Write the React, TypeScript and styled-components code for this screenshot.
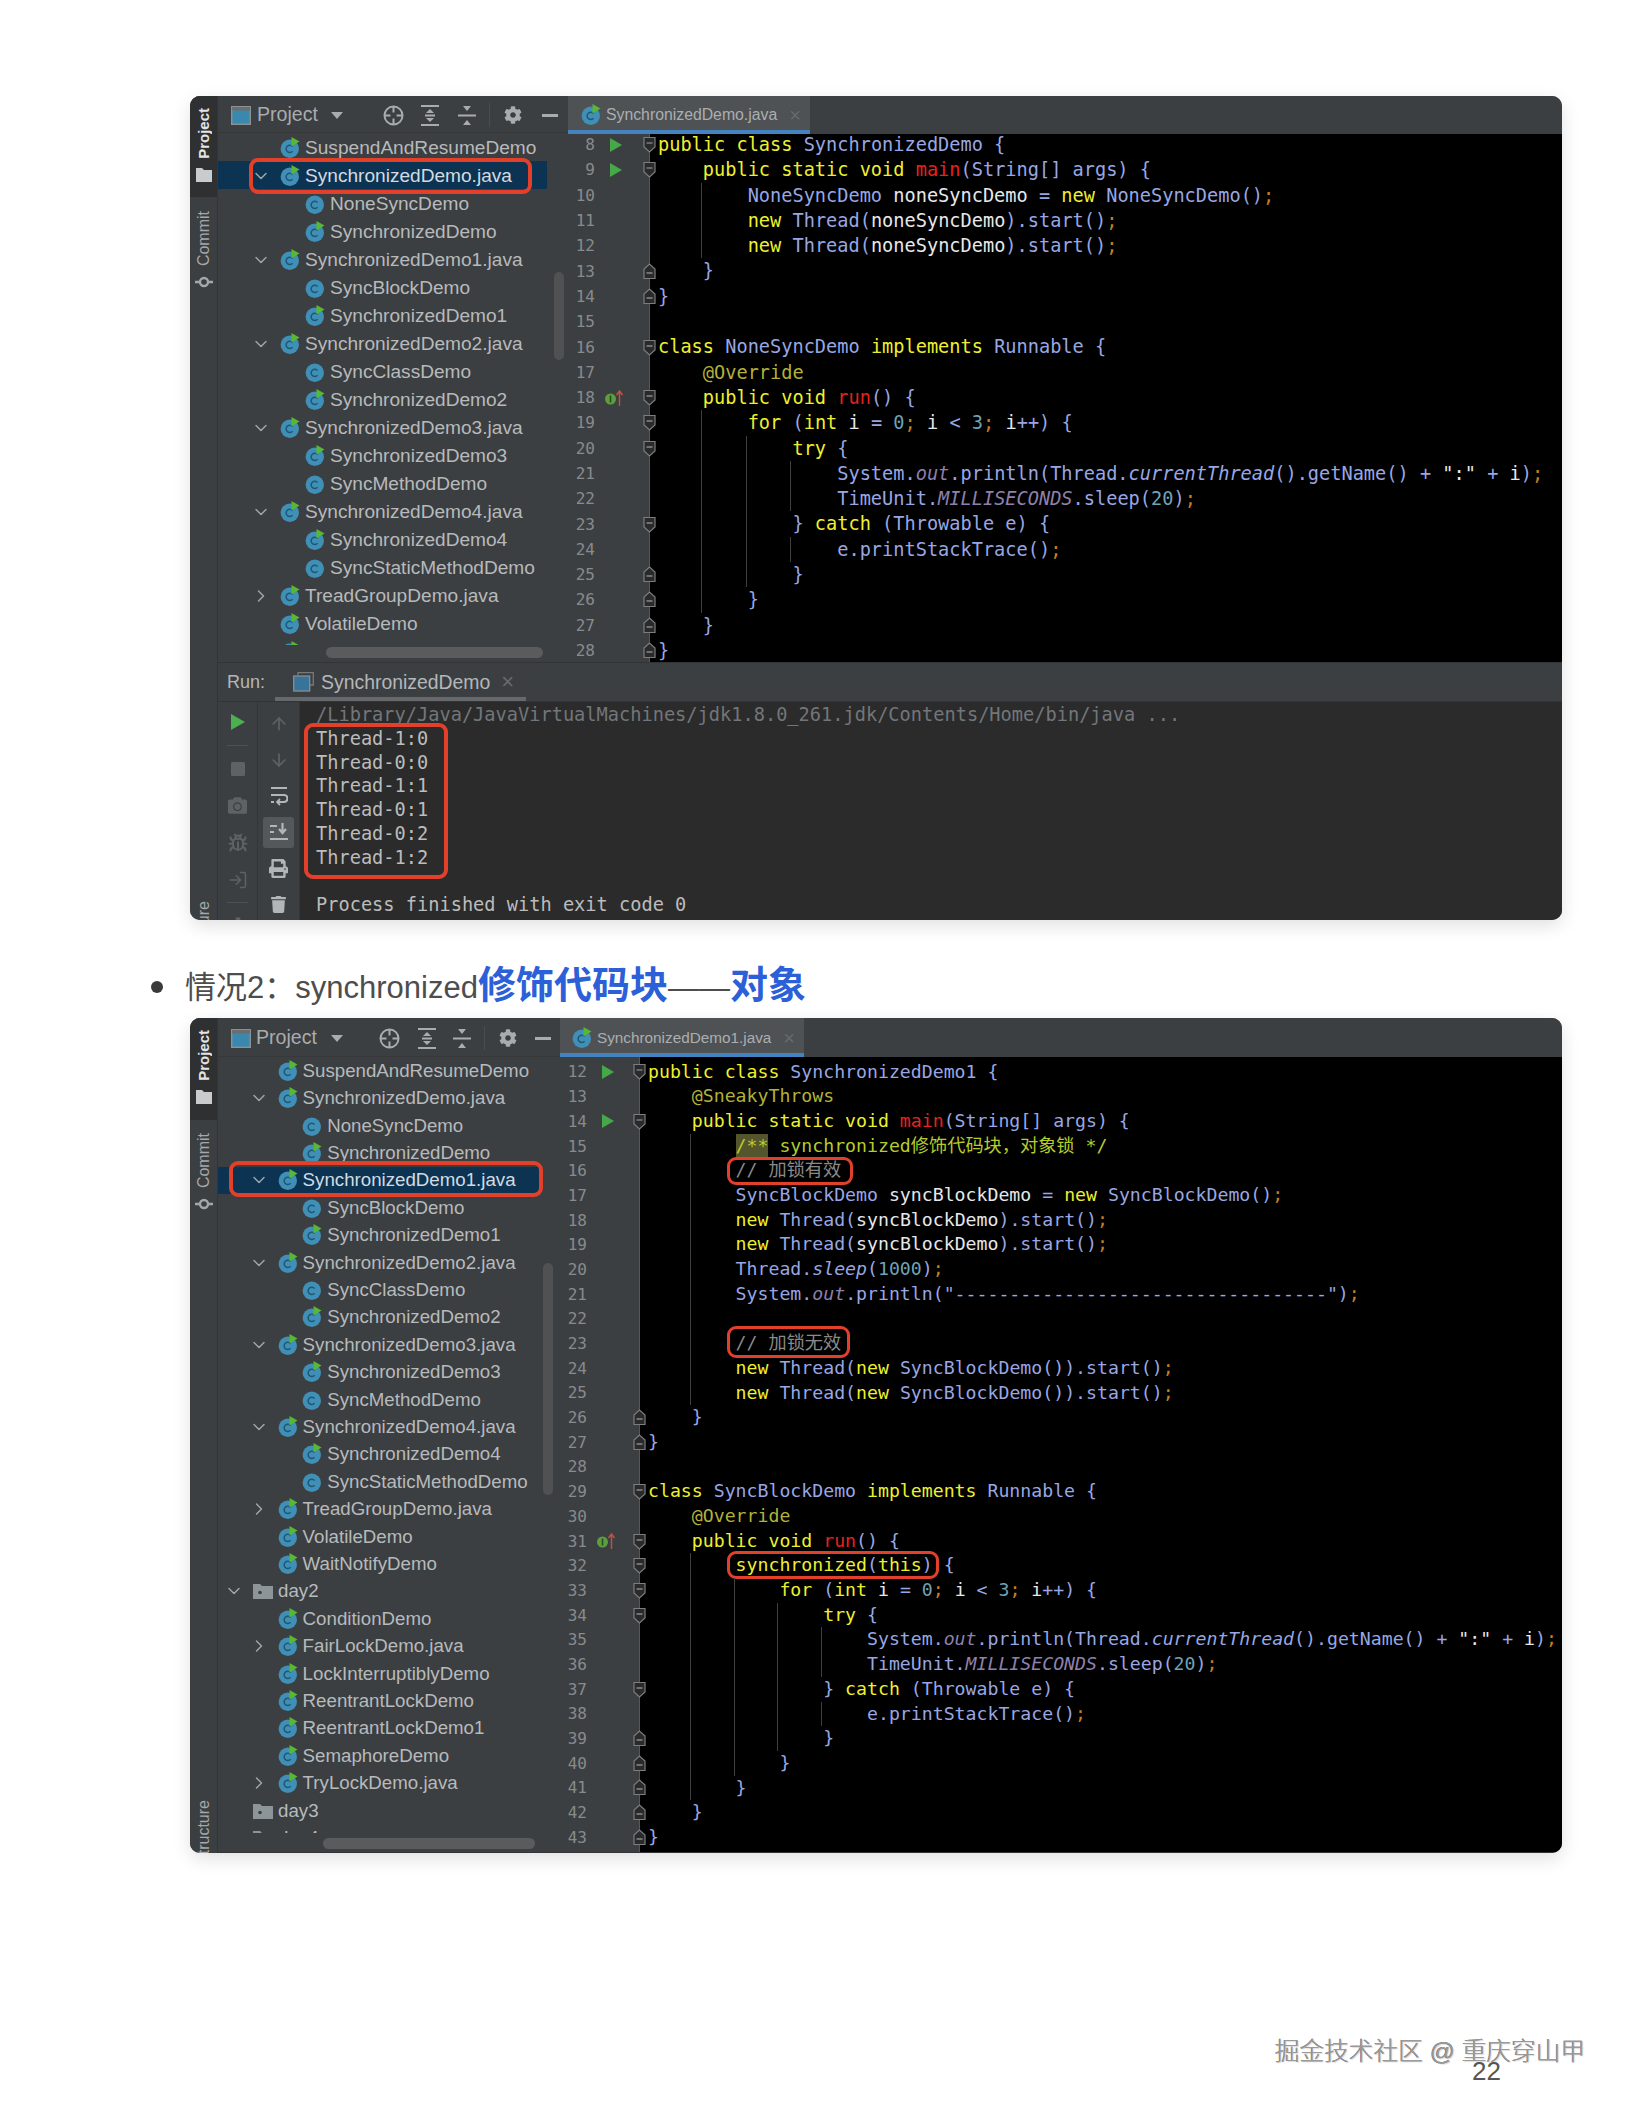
import React from 'react'
import styled, { createGlobalStyle, ThemeProvider } from 'styled-components'
import { ArrowDown, ArrowUp, Bug, ChevronDown, ChevronRight, LogIn } from 'lucide-react'
import { FaCamera, FaCog, FaPrint, FaTrash } from 'react-icons/fa'

type Metrics = {
  height: number
  treeW: number
  toolbarH: number
  tabH: number
  rowH: number
  rowNudge: number
  listH: number
  treeFont: number
  baseIndent: number
  stepIndent: number
  selW: number
  boxLeft: number
  boxW: number
  boxTop: number
  boxBottom: number
  thumbLeft: number
  thumbW: number
  thumbBottom: number
  vThumbTop: number
  vThumbH: number
  vThumbRight: number
  tabW: number
  tabFont: number
  tabPad: number
  gutterW: number
  codeFont: number
  lineH: number
  codeShift: number
  codePad: number
  topH: number
  commitGap: number
  structureGap: number
  projectH: number
  toolGaps: number[]
}

const m = (key: keyof Metrics) => (p: { theme: any }) => p.theme[key]

const GlobalStyle = createGlobalStyle`
  html, body {
    margin: 0;
    background: #fff;
  }
`

const Page = styled.div`
  width: 1632px;
  height: 2112px;
  padding-top: 96px;
  box-sizing: border-box;
  overflow: hidden;
  background: #fff;
`

const Window = styled.div`
  display: grid;
  grid-template-columns: 28px 1fr;
  width: 1372px;
  height: ${m('height')}px;
  margin-left: 190px;
  border-radius: 10px;
  overflow: hidden;
  background: #3c3f41;
  box-shadow: 0 6px 18px rgba(0, 0, 0, 0.12);
`

const Stripe = styled.div`
  display: flex;
  flex-direction: column;
  overflow: hidden;
  border-right: 1px solid #333537;
  background: #3c3f41;
  font-family: 'Liberation Sans', sans-serif;
  font-size: 16px;
`

const StripeTab = styled.div<{ $active?: boolean }>`
  display: flex;
  flex-direction: column;
  align-items: center;
  flex-shrink: 0;
  height: ${(p) => (p.$active ? `${p.theme.projectH}px` : 'auto')};
  padding-top: ${(p) => (p.$active ? 12 : p.theme.commitGap)}px;
  box-sizing: border-box;
  background: ${(p) => (p.$active ? '#2e3032' : 'transparent')};
  color: ${(p) => (p.$active ? '#e4e4e4' : '#a5a8aa')};
`

const StripeLabel = styled.span<{ $bold?: boolean }>`
  writing-mode: vertical-rl;
  transform: rotate(180deg);
  line-height: 18px;
  font-size: ${(p) => (p.$bold ? 15 : 16)}px;
  font-weight: ${(p) => (p.$bold ? 700 : 400)};
`

const StripeBottom = styled(StripeLabel)`
  flex-shrink: 0;
  align-self: center;
  margin-top: ${m('structureGap')}px;
  color: #a5a8aa;
  transform: rotate(180deg);
`

const Main = styled.div`
  display: flex;
  flex-direction: column;
  min-width: 0;
`

const TopSplit = styled.div`
  display: flex;
  flex-shrink: 0;
  height: ${m('topH')}px;
  overflow: hidden;
  border-bottom: 1px solid #323436;
  box-sizing: border-box;
`

const TreePanel = styled.div`
  position: relative;
  flex-shrink: 0;
  width: ${m('treeW')}px;
  font-family: 'Liberation Sans', sans-serif;
  font-size: ${m('treeFont')}px;
  color: #b7babc;
`

const Toolbar = styled.div`
  display: flex;
  align-items: center;
  height: ${m('toolbarH')}px;
  padding: 2px 0 0 13px;
  border-bottom: 1px solid #36383a;
  box-sizing: border-box;
  font-size: 19.6px;
  color: #a9acae;
`

const ToolItem = styled.span<{ $ml: number }>`
  display: flex;
  align-items: center;
  margin-left: ${(p) => p.$ml}px;
  line-height: 1;
`

const ToolDivider = styled(ToolItem)`
  width: 1px;
  height: 24px;
  background: #4a4c4e;
`

const TreeList = styled.div`
  height: ${m('listH')}px;
  overflow: hidden;
`

const TreeRow = styled.div<{ $level: number; $selected?: boolean }>`
  position: relative;
  display: flex;
  align-items: center;
  width: ${m('selW')}px;
  height: ${m('rowH')}px;
  padding-top: ${m('rowNudge')}px;
  padding-left: ${(p) => p.theme.baseIndent + p.$level * p.theme.stepIndent}px;
  box-sizing: border-box;
  background: ${(p) => (p.$selected ? '#0c3452' : 'transparent')};
  color: ${(p) => (p.$selected ? '#d3dbe2' : 'inherit')};
  white-space: nowrap;
`

const Arrow = styled.span`
  display: flex;
  justify-content: center;
  flex-shrink: 0;
  width: 24px;
  margin-right: 7px;
  color: #a3a6a8;
`

const NodeIcon = styled.svg`
  flex-shrink: 0;
  width: 20px;
  height: 20px;
  margin-right: 5px;
  overflow: visible;
`

const TreeBox = styled.span`
  position: absolute;
  left: ${m('boxLeft')}px;
  width: ${m('boxW')}px;
  top: ${m('boxTop')}px;
  bottom: ${m('boxBottom')}px;
  box-sizing: border-box;
  border: 4px solid #e2402a;
  border-radius: 9px;
`

const HThumb = styled.div`
  position: absolute;
  left: ${m('thumbLeft')}px;
  width: ${m('thumbW')}px;
  bottom: ${m('thumbBottom')}px;
  height: 11px;
  border-radius: 6px;
  background: #595b5d;
`

const VThumb = styled.div`
  position: absolute;
  right: ${m('vThumbRight')}px;
  top: ${m('vThumbTop')}px;
  width: 10px;
  height: ${m('vThumbH')}px;
  border-radius: 5px;
  background: #4f5153;
`

const Editor = styled.div`
  display: flex;
  flex-direction: column;
  flex: 1;
  min-width: 0;
`

const TabBar = styled.div`
  display: flex;
  flex-shrink: 0;
  height: ${m('tabH')}px;
  background: #3c3f41;
`

const Tab = styled.div`
  display: flex;
  align-items: center;
  width: ${m('tabW')}px;
  padding-left: ${m('tabPad')}px;
  padding-top: 4px;
  border-bottom: 4px solid #4383c0;
  box-sizing: border-box;
  background: #4e5254;
  font-family: 'Liberation Sans', sans-serif;
  font-size: ${m('tabFont')}px;
  color: #abaeb0;
`

const TabClose = styled.span`
  margin-left: 12px;
  color: #666a6c;
  font-size: 20px;
  line-height: 1;
`

const EditorBody = styled.div`
  display: flex;
  flex: 1;
  min-height: 0;
  overflow: hidden;
  font-family: 'DejaVu Sans Mono', 'Noto Sans CJK SC', monospace;
  font-variant-ligatures: none;
`

const Gutter = styled.div`
  position: relative;
  z-index: 1;
  flex-shrink: 0;
  width: ${m('gutterW')}px;
  box-sizing: border-box;
  border-right: 1px solid #55575a;
  background: #3c3f41;
  font-size: 16px;
  color: #888b8d;
  & > :first-child {
    margin-top: ${m('codeShift')}px;
  }
`

const GutterRow = styled.div`
  display: flex;
  align-items: center;
  height: ${m('lineH')}px;
`

const LineNo = styled.span`
  width: 27px;
  text-align: right;
  flex-shrink: 0;
`

const RunMark = styled.svg`
  flex-shrink: 0;
  width: 14px;
  height: 16px;
  margin-left: 14px;
`

const OverrideMark = styled.svg`
  flex-shrink: 0;
  width: 22px;
  height: 18px;
  margin-left: 9px;
`

const FoldMark = styled.svg`
  flex-shrink: 0;
  width: 13px;
  height: 19px;
  margin-left: auto;
  margin-right: -7px;
`

const CodeArea = styled.div`
  flex: 1;
  min-width: 0;
  padding-left: ${m('codePad')}px;
  background: #000;
  font-size: ${m('codeFont')}px;
  line-height: ${m('lineH')}px;
  & > :first-child {
    margin-top: ${m('codeShift')}px;
  }
`

const CodeLine = styled.div`
  position: relative;
  height: ${m('lineH')}px;
  white-space: pre;
  color: #e4e6e8;
`

const Guide = styled.span<{ $level: number }>`
  position: absolute;
  top: 0;
  bottom: 0;
  left: calc(${(p) => p.$level * 4}ch - 2px);
  width: 1px;
  background: #3f3f3f;
`

const tokenColors: Record<string, string> = {
  k: '#eef02e',
  t: '#98a7e4',
  v: '#e6e8ea',
  r: '#e8211d',
  a: '#b3b13a',
  c: '#8a8a8a',
  d: '#b6cc2a',
  n: '#6fa3b5',
  o: '#c47f22',
  i: '#98a7e4',
  f: '#8f80ad',
}

const Token = styled.span<{ $kind: string }>`
  color: ${(p) => tokenColors[p.$kind]};
  font-style: ${(p) => (p.$kind === 'i' || p.$kind === 'f' ? 'italic' : 'normal')};
`

const DocOpen = styled.span`
  display: inline-block;
  background: #55552d;
  color: #b6cc2a;
`

const CodeBox = styled.span<{ $top: number; $bottom: number; $right: number }>`
  position: relative;
  display: inline-block;
  &::after {
    content: '';
    position: absolute;
    left: -9px;
    right: ${(p) => p.$right}px;
    top: ${(p) => p.$top}px;
    bottom: ${(p) => p.$bottom}px;
    border: 3.5px solid #e2402a;
    border-radius: 9px;
  }
`

const RunPanel = styled.div`
  display: flex;
  flex-direction: column;
  flex: 1;
  min-height: 0;
`

const RunBar = styled.div`
  display: flex;
  align-items: center;
  flex-shrink: 0;
  height: 39px;
  padding-left: 9px;
  border-bottom: 1px solid #323436;
  box-sizing: border-box;
  font-family: 'Liberation Sans', sans-serif;
  font-size: 18px;
  color: #b4b7b9;
`

const RunTab = styled.div`
  display: flex;
  align-items: center;
  align-self: stretch;
  width: 251px;
  margin-left: 10px;
  padding: 4px 0 0 18px;
  border-bottom: 4px solid #66696b;
  box-sizing: border-box;
  font-size: 19.4px;
`

const RunTabClose = styled.span`
  margin-left: 11px;
  font-size: 22px;
  color: #686b6d;
`

const RunBody = styled.div`
  display: flex;
  flex: 1;
  min-height: 0;
  overflow: hidden;
`

const ToolCol = styled.div<{ $width: number; $top: number }>`
  flex-shrink: 0;
  width: ${(p) => p.$width}px;
  padding-top: ${(p) => p.$top}px;
  box-sizing: border-box;
  border-right: 1px solid #333537;
`

const ColTool = styled.div<{ $h: number; $dim?: boolean }>`
  display: flex;
  align-items: center;
  justify-content: center;
  height: ${(p) => p.$h}px;
  color: ${(p) => (p.$dim ? '#5f6264' : '#b3b6b8')};
`

const ActiveTool = styled.span`
  display: flex;
  align-items: center;
  justify-content: center;
  width: 31px;
  height: 31px;
  border-radius: 3px;
  background: #55585a;
`

const ColRule = styled.div`
  height: 1px;
  margin: 4px 9px;
  background: #4d4f51;
`

const Console = styled.div`
  flex: 1;
  min-width: 0;
  padding: 1px 0 0 16px;
  background: #2b2b2b;
  font-family: 'DejaVu Sans Mono', monospace;
  font-size: 18.65px;
  line-height: 23.8px;
  font-variant-ligatures: none;
  white-space: pre;
  color: #bcbcbc;
`

const ConsoleCmd = styled.div`
  color: #72767a;
`

const OutputBox = styled.div`
  position: relative;
  width: fit-content;
  &::after {
    content: '';
    position: absolute;
    left: -12px;
    right: -20px;
    top: -4px;
    bottom: -9px;
    border: 4px solid #e2402a;
    border-radius: 9px;
  }
`

const Heading = styled.div`
  display: flex;
  align-items: center;
  height: 98px;
  padding-top: 24px;
  margin-left: 151px;
  box-sizing: border-box;
  font-family: 'Liberation Sans', 'Noto Sans CJK SC', sans-serif;
  font-size: 31px;
  color: #4d4d4d;
  white-space: nowrap;
`

const Bullet = styled.span`
  width: 12px;
  height: 12px;
  margin: 12px 22px 0 0;
  border-radius: 50%;
  background: #3a3a3a;
`

const Strong = styled.strong`
  font-size: 38px;
  font-weight: 700;
  color: #2c60d8;
`

const Dash = styled.span`
  font-size: 31px;
  color: #4d4d4d;
`

const Watermark = styled.div`
  margin: 184px 0 0 1275px;
  font-family: 'Liberation Sans', 'Noto Sans CJK SC', sans-serif;
  font-size: 24.7px;
  font-weight: 300;
  line-height: 30px;
  color: #9a9a9a;
  text-shadow: -0.5px -0.5px 0 #6e6e6e, 1px 1px 1px #dcdcdc;
  white-space: nowrap;
`

const PageNumber = styled.div`
  margin: -11px 0 0 1472px;
  font-family: 'Liberation Sans', sans-serif;
  font-size: 26px;
  line-height: 30px;
  color: #555;
`

const ClassIcon = ({ run }: { run?: boolean }) => (
  <NodeIcon viewBox="0 0 20 20">
    <circle cx="9.8" cy="10.8" r="9.2" fill="#3f8fb6" />
    <path d="M12.6 8.4a3.7 3.7 0 1 0 0 4.9" fill="none" stroke="#1f5775" strokeWidth="1.5" />
    {run && <path d="M11.5 -1 L19.5 3.5 L11.5 8.5 Z" fill="#58b833" />}
  </NodeIcon>
)

const FolderIcon = () => (
  <NodeIcon viewBox="0 0 20 20">
    <path d="M0 3h7l2 2h11v13H0z" fill="#8e9598" />
    <circle cx="7" cy="11.5" r="1.8" fill="#3c3f41" />
  </NodeIcon>
)

const StripeFolder = styled.svg`
  width: 16px;
  height: 14px;
  margin-top: 9px;
`

const StripeCommit = styled.svg`
  width: 18px;
  height: 14px;
  margin-top: 9px;
`

const Play = ({ size = 14 }: { size?: number }) => (
  <svg width={size} height={size * 1.15} viewBox="0 0 14 16">
    <path d="M0 0 L14 8 L0 16 Z" fill="#4caf50" />
  </svg>
)

const Fold = ({ up }: { up?: boolean }) => (
  <FoldMark viewBox="0 0 13 19">
    <g transform={up ? 'rotate(180 6.5 9.5)' : undefined}>
      <path d="M1 2.5h11v9.5L6.5 17 1 12z" fill="#2a2a2a" stroke="#7b7d7f" strokeWidth="1.2" />
      <path d="M3.5 8h6" stroke="#a0a2a4" strokeWidth="1.2" />
    </g>
  </FoldMark>
)

const ProjectGlyph = () => (
  <svg width="20" height="19" viewBox="0 0 20 19">
    <rect x="0.7" y="0.7" width="18.6" height="17.6" fill="#3a88ad" stroke="#8d9193" strokeWidth="1.4" />
    <rect x="1" y="1" width="18" height="3.5" fill="#6a6e70" />
  </svg>
)

const LocateGlyph = () => (
  <svg width="21" height="21" viewBox="0 0 21 21" fill="none" stroke="currentColor" strokeWidth="2">
    <circle cx="10.5" cy="10.5" r="9" />
    <path d="M10.5 2v5.5M10.5 13.5V19M2 10.5h5.5M13.5 10.5H19" />
  </svg>
)

const ExpandGlyph = () => (
  <svg width="18" height="21" viewBox="0 0 18 21" fill="currentColor">
    <rect x="0" y="0" width="18" height="2" />
    <path d="M9 4l4 4H5z" />
    <rect x="4" y="9.5" width="10" height="2" />
    <path d="M9 17l-4-4h8z" />
    <rect x="0" y="19" width="18" height="2" />
  </svg>
)

const CollapseGlyph = () => (
  <svg width="18" height="21" viewBox="0 0 18 21" fill="currentColor">
    <path d="M5 1h8l-4 5z" />
    <rect x="0" y="9.5" width="18" height="2" />
    <path d="M5 20h8l-4-5z" />
  </svg>
)

const WrapGlyph = () => (
  <svg width="18" height="20" viewBox="0 0 18 20" fill="none" stroke="currentColor" strokeWidth="2.2">
    <path d="M1 2h16M1 9h13a3 3 0 0 1 0 7H8M1 16h3" />
    <path d="M10 13l-3 3 3 3" strokeWidth="1.8" />
  </svg>
)

const ScrollEndGlyph = () => (
  <svg width="18" height="18" viewBox="0 0 18 18" fill="none" stroke="currentColor" strokeWidth="2.2">
    <path d="M12.5 0v9M9 6l3.5 4L16 6M0 3h7M0 9h4M0 16h18" />
  </svg>
)

const RunConfigGlyph = styled.svg`
  width: 21px;
  height: 20px;
  margin-right: 7px;
`

const Override = () => (
  <OverrideMark viewBox="0 0 22 18">
    <circle cx="6.5" cy="10" r="5.5" fill="#5c9e3f" />
    <rect x="5.7" y="6.5" width="1.6" height="7" fill="#2b4a1e" />
    <path d="M15.5 17V3M12.5 6l3-4 3 4" fill="none" stroke="#c9503f" strokeWidth="1.4" />
  </OverrideMark>
)

type Row = { label: string; level: number; kind?: 'run' | 'plain' | 'folder'; open?: boolean; shut?: boolean; selected?: boolean }

const r = (label: string, level: number, kind: Row['kind'] = 'run', extra: Partial<Row> = {}): Row => ({
  label,
  level,
  kind,
  ...extra,
})

const openFile = (label: string, selected = false) => r(label, 1, 'run', { open: true, selected })

const sharedRows = (selected: number): Row[] => [
  r('SuspendAndResumeDemo', 1),
  openFile('SynchronizedDemo.java', selected === 0),
  r('NoneSyncDemo', 2, 'plain'),
  r('SynchronizedDemo', 2),
  openFile('SynchronizedDemo1.java', selected === 1),
  r('SyncBlockDemo', 2, 'plain'),
  r('SynchronizedDemo1', 2),
  openFile('SynchronizedDemo2.java'),
  r('SyncClassDemo', 2, 'plain'),
  r('SynchronizedDemo2', 2),
  openFile('SynchronizedDemo3.java'),
  r('SynchronizedDemo3', 2),
  r('SyncMethodDemo', 2, 'plain'),
  openFile('SynchronizedDemo4.java'),
  r('SynchronizedDemo4', 2),
  r('SyncStaticMethodDemo', 2, 'plain'),
  r('TreadGroupDemo.java', 1, 'run', { shut: true }),
  r('VolatileDemo', 1),
]

const firstRows = [...sharedRows(0), r('', 1)]

const secondRows = [
  ...sharedRows(1),
  r('WaitNotifyDemo', 1),
  r('day2', 0, 'folder', { open: true }),
  r('ConditionDemo', 1),
  r('FairLockDemo.java', 1, 'run', { shut: true }),
  r('LockInterruptiblyDemo', 1),
  r('ReentrantLockDemo', 1),
  r('ReentrantLockDemo1', 1),
  r('SemaphoreDemo', 1),
  r('TryLockDemo.java', 1, 'run', { shut: true }),
  r('day3', 0, 'folder'),
  r('day4', 0, 'folder'),
]

type Part = [string, string] | { box: Part[]; top: number; bottom: number; right: number }
type Line = { no: number; g: number; parts: Part[]; fold?: 'down' | 'up'; run?: boolean; over?: boolean }

const L = (no: number, g: number, parts: Part[], mark: Partial<Line> = {}): Line => ({ no, g, parts, ...mark })
const down = { fold: 'down' as const }
const up = { fold: 'up' as const }

const thread = (name: string): Part[] => [
  ['v', '        '],
  ['k', 'new '],
  ['t', 'Thread('],
  ['v', name],
  ['t', ').start()'],
  ['o', ';'],
]

const forLoop = (pad: string): Part[] => [
  ['k', pad + 'for '],
  ['t', '('],
  ['k', 'int '],
  ['v', 'i '],
  ['t', '= '],
  ['n', '0'],
  ['o', '; '],
  ['v', 'i '],
  ['t', '< '],
  ['n', '3'],
  ['o', '; '],
  ['v', 'i'],
  ['t', '++) {'],
]

const printName = (pad: string): Part[] => [
  ['t', pad + 'System.'],
  ['f', 'out'],
  ['t', '.println(Thread.'],
  ['i', 'currentThread'],
  ['t', '().getName() + '],
  ['v', '":"'],
  ['t', ' + '],
  ['v', 'i'],
  ['t', ')'],
  ['o', ';'],
]

const sleep = (pad: string): Part[] => [
  ['t', pad + 'TimeUnit.'],
  ['f', 'MILLISECONDS'],
  ['t', '.sleep('],
  ['n', '20'],
  ['t', ')'],
  ['o', ';'],
]

const catchLine = (pad: string): Part[] => [
  ['t', pad + '} '],
  ['k', 'catch '],
  ['t', '(Throwable e) {'],
]

const trace = (pad: string): Part[] => [
  ['t', pad + 'e.printStackTrace()'],
  ['o', ';'],
]

const mainSig: Part[] = [
  ['k', '    public static void '],
  ['r', 'main'],
  ['t', '(String[] args) {'],
]

const runSig: Part[] = [
  ['k', '    public void '],
  ['r', 'run'],
  ['t', '() {'],
]

const firstCode: Line[] = [
  L(8, 0, [['k', 'public class '], ['t', 'SynchronizedDemo {']], { ...down, run: true }),
  L(9, 0, mainSig, { ...down, run: true }),
  L(10, 1, [['t', '        NoneSyncDemo '], ['v', 'noneSyncDemo '], ['t', '= '], ['k', 'new '], ['t', 'NoneSyncDemo()'], ['o', ';']]),
  L(11, 1, thread('noneSyncDemo')),
  L(12, 1, thread('noneSyncDemo')),
  L(13, 0, [['t', '    }']], up),
  L(14, 0, [['t', '}']], up),
  L(15, 0, []),
  L(16, 0, [['k', 'class '], ['t', 'NoneSyncDemo '], ['k', 'implements '], ['t', 'Runnable {']], down),
  L(17, 0, [['a', '    @Override']]),
  L(18, 0, runSig, { ...down, over: true }),
  L(19, 1, forLoop('        '), down),
  L(20, 2, [['k', '            try '], ['t', '{']], down),
  L(21, 3, printName('                ')),
  L(22, 3, sleep('                ')),
  L(23, 2, catchLine('            '), down),
  L(24, 3, trace('                ')),
  L(25, 2, [['t', '            }']], up),
  L(26, 1, [['t', '        }']], up),
  L(27, 0, [['t', '    }']], up),
  L(28, 0, [['t', '}']], up),
]

const pad8: Part = ['v', '        ']
const newBlock: Part[] = [pad8, ['k', 'new '], ['t', 'Thread('], ['k', 'new '], ['t', 'SyncBlockDemo()).start()'], ['o', ';']]

const secondCode: Line[] = [
  L(12, 0, [['k', 'public class '], ['t', 'SynchronizedDemo1 {']], { ...down, run: true }),
  L(13, 0, [['a', '    @SneakyThrows']]),
  L(14, 0, mainSig, { ...down, run: true }),
  L(15, 1, [pad8, ['doc', '/**'], ['d', ' synchronized修饰代码块，对象锁 */']]),
  L(16, 1, [pad8, { box: [['c', '// 加锁有效']], top: -1, bottom: -2, right: -12 }]),
  L(17, 1, [pad8, ['t', 'SyncBlockDemo '], ['v', 'syncBlockDemo '], ['t', '= '], ['k', 'new '], ['t', 'SyncBlockDemo()'], ['o', ';']]),
  L(18, 1, thread('syncBlockDemo')),
  L(19, 1, thread('syncBlockDemo')),
  L(20, 1, [pad8, ['t', 'Thread.'], ['i', 'sleep'], ['t', '('], ['n', '1000'], ['t', ')'], ['o', ';']]),
  L(21, 1, [pad8, ['t', 'System.'], ['f', 'out'], ['t', '.println("' + '-'.repeat(34) + '")'], ['o', ';']]),
  L(22, 1, []),
  L(23, 1, [pad8, { box: [['c', '// 加锁无效']], top: -5, bottom: -2, right: -9 }]),
  L(24, 1, newBlock),
  L(25, 1, newBlock),
  L(26, 0, [['t', '    }']], up),
  L(27, 0, [['t', '}']], up),
  L(28, 0, []),
  L(29, 0, [['k', 'class '], ['t', 'SyncBlockDemo '], ['k', 'implements '], ['t', 'Runnable {']], down),
  L(30, 0, [['a', '    @Override']]),
  L(31, 0, runSig, { ...down, over: true }),
  L(32, 1, [pad8, { box: [['k', 'synchronized'], ['t', '('], ['k', 'this'], ['t', ')']], top: -2, bottom: -1, right: -6 }, ['t', ' {']], down),
  L(33, 2, forLoop('            '), down),
  L(34, 3, [['k', '                try '], ['t', '{']], down),
  L(35, 4, printName('                    ')),
  L(36, 4, sleep('                    ')),
  L(37, 3, catchLine('                '), down),
  L(38, 4, trace('                    ')),
  L(39, 3, [['t', '                }']], up),
  L(40, 2, [['t', '            }']], up),
  L(41, 1, [['t', '        }']], up),
  L(42, 0, [['t', '    }']], up),
  L(43, 0, [['t', '}']], up),
]

const renderPart = (part: Part, key: number): React.ReactNode => {
  if (Array.isArray(part)) {
    if (part[0] === 'doc') return <DocOpen key={key}>{part[1]}</DocOpen>
    return (
      <Token key={key} $kind={part[0]}>
        {part[1]}
      </Token>
    )
  }
  return (
    <CodeBox key={key} $top={part.top} $bottom={part.bottom} $right={part.right}>
      {part.box.map(renderPart)}
    </CodeBox>
  )
}

function TreeNode({ row }: { row: Row }) {
  return (
    <TreeRow $level={row.level} $selected={row.selected}>
      <Arrow>
        {row.open && <ChevronDown size={20} strokeWidth={1.7} />}
        {row.shut && <ChevronRight size={20} strokeWidth={1.7} />}
      </Arrow>
      {row.kind === 'folder' ? <FolderIcon /> : <ClassIcon run={row.kind === 'run'} />}
      {row.label}
      {row.selected && <TreeBox />}
    </TreeRow>
  )
}

function ProjectTree({ rows, metrics }: { rows: Row[]; metrics: Metrics }) {
  const g = metrics.toolGaps
  return (
    <TreePanel>
      <Toolbar>
        <ProjectGlyph />
        <ToolItem $ml={g[0]}>Project</ToolItem>
        <ToolItem $ml={g[1]}>
          <svg width="12" height="7" viewBox="0 0 12 7">
            <path d="M0 0h12L6 7z" fill="currentColor" />
          </svg>
        </ToolItem>
        <ToolItem $ml={g[2]}>
          <LocateGlyph />
        </ToolItem>
        <ToolItem $ml={g[3]}>
          <ExpandGlyph />
        </ToolItem>
        <ToolItem $ml={g[4]}>
          <CollapseGlyph />
        </ToolItem>
        <ToolDivider $ml={g[5]} />
        <ToolItem $ml={g[6]}>
          <FaCog size={18} />
        </ToolItem>
        <ToolItem $ml={g[7]}>
          <svg width="16" height="3" viewBox="0 0 16 3">
            <rect width="16" height="3" fill="currentColor" />
          </svg>
        </ToolItem>
      </Toolbar>
      <TreeList>
        {rows.map((row, i) => (
          <TreeNode key={i} row={row} />
        ))}
      </TreeList>
      <VThumb />
      <HThumb />
    </TreePanel>
  )
}

function CodeEditor({ title, lines }: { title: string; lines: Line[] }) {
  return (
    <Editor>
      <TabBar>
        <Tab>
          <ClassIcon run />
          {title}
          <TabClose>×</TabClose>
        </Tab>
      </TabBar>
      <EditorBody>
        <Gutter>
          {lines.map((line) => (
            <GutterRow key={line.no}>
              <LineNo>{line.no}</LineNo>
              {line.run && (
                <RunMark viewBox="0 0 14 16">
                  <path d="M1 1 L13 8 L1 15 Z" fill="#47a84a" />
                </RunMark>
              )}
              {line.over && <Override />}
              {line.fold && <Fold up={line.fold === 'up'} />}
            </GutterRow>
          ))}
        </Gutter>
        <CodeArea>
          {lines.map((line) => (
            <CodeLine key={line.no}>
              {Array.from({ length: line.g }, (_, i) => (
                <Guide key={i} $level={i + 1} />
              ))}
              {line.parts.map(renderPart)}
            </CodeLine>
          ))}
        </CodeArea>
      </EditorBody>
    </Editor>
  )
}

function SideStripe() {
  return (
    <Stripe>
      <StripeTab $active>
        <StripeLabel $bold>Project</StripeLabel>
        <StripeFolder viewBox="0 0 16 14">
          <path d="M0 0h6l2 2h8v12H0z" fill="#c9cbcd" />
        </StripeFolder>
      </StripeTab>
      <StripeTab>
        <StripeLabel>Commit</StripeLabel>
        <StripeCommit viewBox="0 0 18 14">
          <circle cx="9" cy="7" r="4" fill="none" stroke="#a5a8aa" strokeWidth="2.4" />
          <path d="M0 7h5M13 7h5" stroke="#a5a8aa" strokeWidth="2.4" />
        </StripeCommit>
      </StripeTab>
      <StripeBottom>Structure</StripeBottom>
    </Stripe>
  )
}

function RunOutput() {
  return (
    <RunPanel>
      <RunBar>
        Run:
        <RunTab>
          <RunConfigGlyph viewBox="0 0 21 20">
            <path d="M5 3V0.7h15.3V13H17" fill="none" stroke="#777a7c" strokeWidth="1.3" />
            <rect x="0.7" y="4" width="16" height="15" fill="#37749a" stroke="#8b8e90" strokeWidth="1.3" />
          </RunConfigGlyph>
          SynchronizedDemo
          <RunTabClose>×</RunTabClose>
        </RunTab>
      </RunBar>
      <RunBody>
        <ToolCol $width={40} $top={2}>
          <ColTool $h={37}>
            <Play />
          </ColTool>
          <ColRule />
          <ColTool $h={37} $dim>
            <svg width="14" height="14" viewBox="0 0 14 14">
              <rect width="14" height="14" rx="1.5" fill="currentColor" />
            </svg>
          </ColTool>
          <ColTool $h={37} $dim>
            <FaCamera size={19} />
          </ColTool>
          <ColTool $h={37} $dim>
            <Bug size={20} strokeWidth={2.4} />
          </ColTool>
          <ColTool $h={37} $dim>
            <LogIn size={20} strokeWidth={1.8} />
          </ColTool>
          <ColRule />
          <ColTool $h={37} $dim>
            <FaCog size={18} />
          </ColTool>
        </ToolCol>
        <ToolCol $width={42} $top={4}>
          <ColTool $h={36} $dim>
            <ArrowUp size={20} strokeWidth={2} />
          </ColTool>
          <ColTool $h={36} $dim>
            <ArrowDown size={20} strokeWidth={2} />
          </ColTool>
          <ColTool $h={36}>
            <WrapGlyph />
          </ColTool>
          <ColTool $h={36}>
            <ActiveTool>
              <ScrollEndGlyph />
            </ActiveTool>
          </ColTool>
          <ColTool $h={36}>
            <FaPrint size={19} />
          </ColTool>
          <ColTool $h={36}>
            <FaTrash size={17} />
          </ColTool>
        </ToolCol>
        <Console>
          <ConsoleCmd>/Library/Java/JavaVirtualMachines/jdk1.8.0_261.jdk/Contents/Home/bin/java ...</ConsoleCmd>
          <OutputBox>
            <div>Thread-1:0</div>
            <div>Thread-0:0</div>
            <div>Thread-1:1</div>
            <div>Thread-0:1</div>
            <div>Thread-0:2</div>
            <div>Thread-1:2</div>
          </OutputBox>
          <div>{'\u00a0'}</div>
          <div>Process finished with exit code 0</div>
        </Console>
      </RunBody>
    </RunPanel>
  )
}

const firstMetrics: Metrics = {
  height: 824,
  treeW: 350,
  toolbarH: 37,
  tabH: 38,
  rowH: 28,
  rowNudge: 2,
  listH: 512,
  treeFont: 19.1,
  baseIndent: 6,
  stepIndent: 25,
  selW: 329,
  boxLeft: 31,
  boxW: 283,
  boxTop: -3,
  boxBottom: -5,
  thumbLeft: 108,
  thumbW: 217,
  thumbBottom: 4,
  vThumbTop: 176,
  vThumbH: 88,
  vThumbRight: 4,
  tabW: 242,
  tabFont: 15.8,
  tabPad: 13,
  gutterW: 82,
  codeFont: 18.62,
  lineH: 25.3,
  codeShift: -2,
  codePad: 8,
  topH: 567,
  commitGap: 14,
  structureGap: 612,
  projectH: 101,
  toolGaps: [6, 13, 40, 17, 19, 12.6, 14, 20],
}

const secondMetrics: Metrics = {
  height: 835,
  treeW: 342,
  toolbarH: 39,
  tabH: 39,
  rowH: 27.42,
  rowNudge: 0,
  listH: 776,
  treeFont: 18.7,
  baseIndent: 4,
  stepIndent: 24.6,
  selW: 323,
  boxLeft: 11,
  boxW: 314,
  boxTop: -6,
  boxBottom: -3,
  thumbLeft: 105,
  thumbW: 212,
  thumbBottom: 3,
  vThumbTop: 245,
  vThumbH: 232,
  vThumbRight: 7,
  tabW: 244,
  tabFont: 15.3,
  tabPad: 12,
  gutterW: 80,
  codeFont: 18.2,
  lineH: 24.7,
  codeShift: 2.65,
  codePad: 8,
  topH: 835,
  commitGap: 13,
  structureGap: 589,
  projectH: 102,
  toolGaps: [5, 14, 36.5, 18, 17, 12.6, 14, 18],
}

export default function App() {
  return (
    <Page>
      <GlobalStyle />
      <ThemeProvider theme={firstMetrics}>
        <Window>
          <SideStripe />
          <Main>
            <TopSplit>
              <ProjectTree rows={firstRows} metrics={firstMetrics} />
              <CodeEditor title="SynchronizedDemo.java" lines={firstCode} />
            </TopSplit>
            <RunOutput />
          </Main>
        </Window>
      </ThemeProvider>
      <Heading>
        <Bullet />
        <span>
          情况2：synchronized<Strong>修饰代码块</Strong>
          <Dash>——</Dash>
          <Strong>对象</Strong>
        </span>
      </Heading>
      <ThemeProvider theme={secondMetrics}>
        <Window>
          <SideStripe />
          <Main>
            <TopSplit>
              <ProjectTree rows={secondRows} metrics={secondMetrics} />
              <CodeEditor title="SynchronizedDemo1.java" lines={secondCode} />
            </TopSplit>
          </Main>
        </Window>
      </ThemeProvider>
      <Watermark>掘金技术社区 @ 重庆穿山甲</Watermark>
      <PageNumber>22</PageNumber>
    </Page>
  )
}
